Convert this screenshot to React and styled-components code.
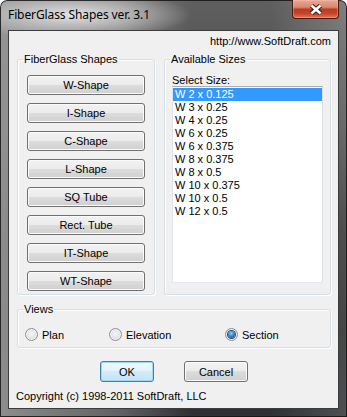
import React from 'react';
import styled, { createGlobalStyle } from 'styled-components';

const GlobalStyle = createGlobalStyle`
  html, body {
    margin: 0;
    padding: 0;
    background: #ffffff;
  }
  body {
    font-family: "Liberation Sans", Arial, sans-serif;
    font-size: 11px;
    color: #000;
  }
`;

const Window = styled.div`
  box-sizing: border-box;
  width: 347px;
  height: 417px;
  display: flex;
  flex-direction: column;
  padding: 0 8px 8px;
  border-radius: 7px 7px 0 0;
  box-shadow: inset 0 0 0 1px rgba(20, 20, 20, 0.85);
  background:
    radial-gradient(ellipse 120px 24px at 72px 15px, rgba(232, 232, 232, 0.95) 0%, rgba(210, 210, 210, 0.55) 55%, rgba(200, 200, 200, 0) 100%),
    linear-gradient(to right, rgba(150, 150, 150, 0.9) 0%, rgba(120, 120, 120, 0.6) 35%, rgba(30, 30, 30, 0.4) 55%, rgba(30, 30, 30, 0.4) 78%, rgba(110, 110, 110, 0.4) 100%),
    linear-gradient(to bottom, #8a8a8a 0%, #6a6a6a 30%, #3b3b3b 55%, #2c2e31 80%, #3a3e44 100%);
`;

const TitleBar = styled.div`
  height: 30px;
  display: flex;
  align-items: flex-start;
  justify-content: space-between;
  flex-shrink: 0;
`;

const Title = styled.div`
  padding-top: 7px;
  font-family: "Noto Sans", "Open Sans", sans-serif;
  font-size: 12px;
  line-height: 16px;
  letter-spacing: -0.1px;
  color: #000;
`;

const CloseButton = styled.div`
  box-sizing: border-box;
  width: 47px;
  height: 19px;
  display: flex;
  align-items: center;
  justify-content: center;
  border: 1px solid #4a1a12;
  border-top: none;
  border-radius: 0 0 4px 4px;
  background: linear-gradient(to bottom, #e9a797 0%, #d98870 40%, #c0391f 52%, #c4452a 75%, #dd7a55 100%);
  box-shadow: inset 0 0 0 1px rgba(255, 200, 180, 0.35);
`;

const Client = styled.div`
  flex: 1;
  display: flex;
  flex-direction: column;
  padding: 4px 7px 0 8px;
  border: 1px solid #3c3c3c;
  background: #f0f0f0;
`;

const UrlRow = styled.div`
  text-align: right;
  line-height: 13px;
`;

const GroupsRow = styled.div`
  display: flex;
  gap: 9px;
  margin-top: 5px;
`;

const Group = styled.fieldset`
  box-sizing: border-box;
  margin: 0;
  min-width: 0;
  width: ${p => p.$width}px;
  height: ${p => p.$height}px;
  padding: ${p => p.$pad};
  border: 1px solid #d5dfe5;
  border-radius: 3px;
  box-shadow: inset 1px 1px 0 #ffffff, 1px 1px 0 #ffffff;
`;

const Legend = styled.legend`
  padding: 0 1px;
  margin-left: ${p => p.$offset ?? -2}px;
  font-size: 11px;
  line-height: 13px;
`;

const ButtonColumn = styled.div`
  display: flex;
  flex-direction: column;
  gap: 8px;
`;

const Button = styled.div`
  box-sizing: border-box;
  width: ${p => p.$width}px;
  height: ${p => p.$height}px;
  display: flex;
  align-items: center;
  justify-content: center;
  font-size: 11px;
  border: 1px solid ${p => (p.$default ? '#3c7fb1' : '#707070')};
  border-radius: 3px;
  background: ${p => (p.$default
    ? 'linear-gradient(to bottom, #f0f8fd 0%, #e3f2fb 50%, #d2ebfa 50%, #c4e4f6 100%)'
    : 'linear-gradient(to bottom, #f2f2f2 0%, #ebebeb 50%, #dddddd 50%, #cfcfcf 100%)')};
  box-shadow: inset 0 0 0 1px ${p => (p.$default ? '#9fd8f6' : '#fbfbfb')};
`;

const SelectLabel = styled.div`
  line-height: 12px;
`;

const ListBox = styled.div`
  box-sizing: border-box;
  width: 151px;
  height: 197px;
  padding-top: 1px;
  background: #ffffff;
  border: 1px solid;
  border-color: #abadb3 #dbdfe6 #e3e9ef #e2e3ea;
`;

const ListItem = styled.div`
  height: 13px;
  line-height: 13px;
  padding-left: 2px;
  white-space: nowrap;
  background: ${p => (p.$selected ? '#3399ff' : 'transparent')};
  color: ${p => (p.$selected ? '#ffffff' : '#000000')};
`;

const ViewsGroup = styled(Group)`
  margin-top: 8px;
`;

const RadioRow = styled.div`
  display: grid;
  grid-template-columns: 84px 116px auto;
  align-items: center;
`;

const RadioItem = styled.div`
  display: flex;
  align-items: center;
  gap: 4px;
  height: 13px;
`;

const RadioCircle = styled.span`
  box-sizing: border-box;
  width: 13px;
  height: 13px;
  border-radius: 50%;
  display: flex;
  align-items: center;
  justify-content: center;
  border: 1px solid #8f8f8f;
  background: radial-gradient(circle at 50% 45%, #f6f6f6 0%, #e4e4e4 50%, #c8c8c8 100%);
  box-shadow: inset 0 0 0 1px #f4f4f4;

  &::after {
    content: '';
    display: ${p => (p.$checked ? 'block' : 'none')};
    width: 7px;
    height: 7px;
    border-radius: 50%;
    background: radial-gradient(circle at 45% 35%, #8fd6ff 0%, #2f8bd6 45%, #0b3f7a 100%);
    box-shadow: 0 0 0 1px #2c4a6a;
  }
`;

const ActionRow = styled.div`
  display: flex;
  justify-content: center;
  gap: 30px;
  margin-top: 13px;
`;

const Copyright = styled.div`
  margin-top: 8px;
  margin-left: -1px;
  line-height: 13px;
`;

const shapes = ['W-Shape', 'I-Shape', 'C-Shape', 'L-Shape', 'SQ Tube', 'Rect. Tube', 'IT-Shape', 'WT-Shape'];

const sizes = [
  'W 2 x 0.125',
  'W 3 x 0.25',
  'W 4 x 0.25',
  'W 6 x 0.25',
  'W 6 x 0.375',
  'W 8 x 0.375',
  'W 8 x 0.5',
  'W 10 x 0.375',
  'W 10 x 0.5',
  'W 12 x 0.5',
];

const views = [
  { label: 'Plan', checked: false },
  { label: 'Elevation', checked: false },
  { label: 'Section', checked: true },
];

const CloseGlyph = () => (
  <svg width="14" height="11" viewBox="0 0 14 11">
    <path d="M2.5 1.5 L11.5 9.5 M11.5 1.5 L2.5 9.5" stroke="#3a1a14" strokeWidth="4.6" fill="none" />
    <path d="M2.5 1.5 L11.5 9.5 M11.5 1.5 L2.5 9.5" stroke="#ffffff" strokeWidth="2.6" fill="none" />
  </svg>
);

const App = () => (
  <>
    <GlobalStyle />
    <Window>
      <TitleBar>
        <Title>FiberGlass Shapes ver. 3.1</Title>
        <CloseButton>
          <CloseGlyph />
        </CloseButton>
      </TitleBar>
      <Client>
        <UrlRow>http://www.SoftDraft.com</UrlRow>
        <GroupsRow>
          <Group $width={138} $height={242} $pad="9px 9px 3px 9px">
            <Legend $offset={-4}>FiberGlass Shapes</Legend>
            <ButtonColumn>
              {shapes.map(s => (
                <Button key={s} $width={118} $height={20}>{s}</Button>
              ))}
            </ButtonColumn>
          </Group>
          <Group $width={167} $height={242} $pad="8px 7px 11px 7px">
            <Legend>Available Sizes</Legend>
            <SelectLabel>Select Size:</SelectLabel>
            <ListBox>
              {sizes.map((s, i) => (
                <ListItem key={s} $selected={i === 0}>{s}</ListItem>
              ))}
            </ListBox>
          </Group>
        </GroupsRow>
        <ViewsGroup $width={314} $height={45} $pad="12px 7px 6px 7px">
          <Legend>Views</Legend>
          <RadioRow>
            {views.map(v => (
              <RadioItem key={v.label}>
                <RadioCircle $checked={v.checked} />
                <span>{v.label}</span>
              </RadioItem>
            ))}
          </RadioRow>
        </ViewsGroup>
        <ActionRow>
          <Button $width={54} $height={21} $default>OK</Button>
          <Button $width={64} $height={21}>Cancel</Button>
        </ActionRow>
        <Copyright>Copyright (c) 1998-2011 SoftDraft, LLC</Copyright>
      </Client>
    </Window>
  </>
);

export default App;
